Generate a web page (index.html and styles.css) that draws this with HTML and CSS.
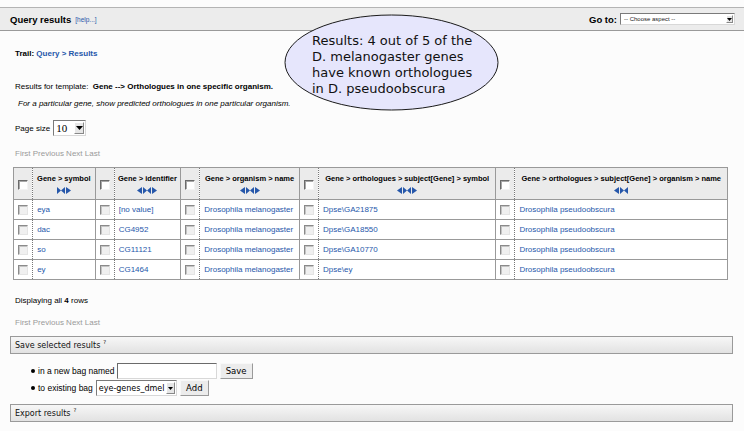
FILE: index.html
```html
<!DOCTYPE html>
<html>
<head>
<meta charset="utf-8">
<link rel="stylesheet" href="styles.css">
</head>
<body>
<div class="topbar">
  <div class="tb-left"><span class="tb-title">Query results</span><a class="help">[help...]</a></div>
  <div class="tb-right"><span class="tb-title">Go to:</span>
    <span class="sel sel-aspect"><span class="sel-text">-- Choose aspect --</span><span class="sel-btn small"><svg width="5" height="3" viewBox="0 0 5 3"><path d="M0 0H5L2.5 3Z" fill="#000"/></svg></span></span>
  </div>
</div>

<div class="main">
  <div class="trail">Trail: <a class="blue">Query &gt; Results</a></div>
  <div class="template">Results for template:&nbsp; <b>Gene --&gt; Orthologues in one specific organism.</b></div>
  <div class="desc">For a particular gene, show predicted orthologues in one particular organism.</div>
  <div class="pagesize">Page size
    <span class="sel sel-page"><span class="sel-num">10</span><span class="sel-btn"><svg width="7" height="4" viewBox="0 0 7 4"><path d="M0 0H7L3.5 4Z" fill="#000"/></svg></span></span>
  </div>
  <div class="pager">First Previous Next Last</div>

  <table class="results">
    <colgroup>
      <col class="c-cb"><col class="c1"><col class="c-cb"><col class="c2"><col class="c-cb"><col class="c3"><col class="c-cb"><col class="c4"><col class="c-cb"><col class="c5">
    </colgroup>
    <thead>
      <tr>
        <th class="cb"><span class="box hbox"></span></th>
        <th><div class="hname">Gene &gt; symbol</div><div class="arrows"><svg class="i-bow" viewBox="0 0 8 7"><path d="M0 0L4 3.5L0 7ZM8 0L4 3.5L8 7Z"/></svg><svg class="i-tri" viewBox="0 0 5 7"><path d="M0 0L5 3.5L0 7Z"/></svg></div></th>
        <th class="cb"><span class="box hbox"></span></th>
        <th><div class="hname">Gene &gt; identifier</div><div class="arrows"><svg class="i-tri" viewBox="0 0 5 7"><path d="M5 0L0 3.5L5 7Z"/></svg><svg class="i-bow" viewBox="0 0 8 7"><path d="M0 0L4 3.5L0 7ZM8 0L4 3.5L8 7Z"/></svg><svg class="i-tri" viewBox="0 0 5 7"><path d="M0 0L5 3.5L0 7Z"/></svg></div></th>
        <th class="cb"><span class="box hbox"></span></th>
        <th><div class="hname">Gene &gt; organism &gt; name</div><div class="arrows"><svg class="i-tri" viewBox="0 0 5 7"><path d="M5 0L0 3.5L5 7Z"/></svg><svg class="i-bow" viewBox="0 0 8 7"><path d="M0 0L4 3.5L0 7ZM8 0L4 3.5L8 7Z"/></svg><svg class="i-tri" viewBox="0 0 5 7"><path d="M0 0L5 3.5L0 7Z"/></svg></div></th>
        <th class="cb"><span class="box hbox"></span></th>
        <th><div class="hname">Gene &gt; orthologues &gt; subject[Gene] &gt; symbol</div><div class="arrows"><svg class="i-tri" viewBox="0 0 5 7"><path d="M5 0L0 3.5L5 7Z"/></svg><svg class="i-bow" viewBox="0 0 8 7"><path d="M0 0L4 3.5L0 7ZM8 0L4 3.5L8 7Z"/></svg><svg class="i-tri" viewBox="0 0 5 7"><path d="M0 0L5 3.5L0 7Z"/></svg></div></th>
        <th class="cb"><span class="box hbox"></span></th>
        <th><div class="hname">Gene &gt; orthologues &gt; subject[Gene] &gt; organism &gt; name</div><div class="arrows"><svg class="i-tri" viewBox="0 0 5 7"><path d="M5 0L0 3.5L5 7Z"/></svg><svg class="i-bow" viewBox="0 0 8 7"><path d="M0 0L4 3.5L0 7ZM8 0L4 3.5L8 7Z"/></svg></div></th>
      </tr>
    </thead>
    <tbody>
      <tr>
        <td class="cb"><span class="box"></span></td><td><a class="blue">eya</a></td>
        <td class="cb"><span class="box"></span></td><td><a class="blue">[no value]</a></td>
        <td class="cb"><span class="box"></span></td><td><a class="blue">Drosophila melanogaster</a></td>
        <td class="cb"><span class="box"></span></td><td><a class="blue">Dpse\GA21875</a></td>
        <td class="cb"><span class="box"></span></td><td><a class="blue">Drosophila pseudoobscura</a></td>
      </tr>
      <tr>
        <td class="cb"><span class="box"></span></td><td><a class="blue">dac</a></td>
        <td class="cb"><span class="box"></span></td><td><a class="blue">CG4952</a></td>
        <td class="cb"><span class="box"></span></td><td><a class="blue">Drosophila melanogaster</a></td>
        <td class="cb"><span class="box"></span></td><td><a class="blue">Dpse\GA18550</a></td>
        <td class="cb"><span class="box"></span></td><td><a class="blue">Drosophila pseudoobscura</a></td>
      </tr>
      <tr>
        <td class="cb"><span class="box"></span></td><td><a class="blue">so</a></td>
        <td class="cb"><span class="box"></span></td><td><a class="blue">CG11121</a></td>
        <td class="cb"><span class="box"></span></td><td><a class="blue">Drosophila melanogaster</a></td>
        <td class="cb"><span class="box"></span></td><td><a class="blue">Dpse\GA10770</a></td>
        <td class="cb"><span class="box"></span></td><td><a class="blue">Drosophila pseudoobscura</a></td>
      </tr>
      <tr>
        <td class="cb"><span class="box"></span></td><td><a class="blue">ey</a></td>
        <td class="cb"><span class="box"></span></td><td><a class="blue">CG1464</a></td>
        <td class="cb"><span class="box"></span></td><td><a class="blue">Drosophila melanogaster</a></td>
        <td class="cb"><span class="box"></span></td><td><a class="blue">Dpse\ey</a></td>
        <td class="cb"><span class="box"></span></td><td><a class="blue">Drosophila pseudoobscura</a></td>
      </tr>
    </tbody>
  </table>

  <div class="displaying">Displaying all <b>4</b> rows</div>
  <div class="pager pager2">First Previous Next Last</div>

  <div class="bar">Save selected results<sup>?</sup></div>
  <div class="saveform">
    <div class="frow"><span class="bullet"></span>in a new bag named<span class="input"></span><span class="btn btn-save">Save</span></div>
    <div class="frow frow2"><span class="bullet"></span>to existing bag<span class="sel sel-bag"><span class="sel-bagtext">eye-genes_dmel</span><span class="sel-btn"><svg width="5" height="3" viewBox="0 0 5 3"><path d="M0 0H5L2.5 3Z" fill="#000"/></svg></span></span><span class="btn btn-add">Add</span></div>
  </div>
  <div class="bar bar2">Export results<sup>?</sup></div>
</div>

<div class="callout">
  <svg class="callout-shape" width="216" height="98" viewBox="0 0 216 98"><ellipse cx="107.5" cy="48.5" rx="106.5" ry="47.5" fill="#e6e6fc" stroke="#1a1a1a" stroke-width="1"/></svg>
  <div class="callout-text">Results: 4 out of 5 of the<br>D. melanogaster genes<br>have known orthologues<br>in D. pseudoobscura</div>
</div>
</body>
</html>
```
FILE: styles.css
```css
html, body { margin: 0; }
body {
  background: #fcfcfc;
  font-family: "Liberation Sans", Arial, sans-serif;
  font-size: 8px;
  color: #000;
  position: relative;
  height: 431px;
  overflow: hidden;
}
.blue { color: #2657aa; text-decoration: none; }

.topbar {
  margin-top: 7px;
  height: 22px;
  border-top: 1px solid #b4b4b4;
  border-bottom: 1px solid #9a9a9a;
  background: #ececec;
  display: flex;
  align-items: center;
  justify-content: space-between;
  padding: 0 9px 0 10px;
}
.tb-left, .tb-right { display: flex; align-items: center; }
.tb-title { font-weight: bold; font-size: 9.5px; }
.help { font-size: 6.5px; color: #2657aa; margin-left: 4px; }

.sel {
  display: inline-flex;
  align-items: center;
  justify-content: space-between;
  box-sizing: border-box;
  background: #fff;
  border: 1px solid;
  border-color: #7a7a7a #d8d8d8 #d8d8d8 #7a7a7a;
  white-space: nowrap;
}
.sel-btn {
  display: flex; align-items: center; justify-content: center;
  box-sizing: border-box;
  flex: none;
  background: #e6e6e6;
  border: 1px solid;
  border-color: #fff #888 #888 #fff;
}
.sel-aspect { width: 115px; height: 12px; margin-left: 3px; padding-left: 3px; }
.sel-text { font-size: 6px; color: #222; }
.sel-btn.small { width: 7px; height: 8px; margin-right: 1px; }

.main { padding: 0 11px 0 10px; }
.trail { margin-top: 17px; line-height: 12px; padding-left: 5px; font-weight: bold; }
.template { margin-top: 21px; line-height: 12px; padding-left: 5px; }
.desc { margin-top: 5px; line-height: 12px; padding-left: 8px; font-style: italic; }
.pagesize { margin-top: 10px; height: 16px; display: flex; align-items: center; padding-left: 5px; }
.sel-page { width: 33px; height: 16px; margin-left: 3px; padding-left: 2px; }
.sel-num { font-family: "Liberation Serif", serif; font-size: 11px; }
.sel-page .sel-btn { width: 10px; height: 12px; margin-right: 1px; }
.pager { margin-top: 12px; line-height: 12px; padding-left: 5px; color: #9a9a9a; }

.results {
  margin: 7px 0 0 3px;
  width: 715px;
  table-layout: fixed;
  border-collapse: collapse;
  border: 1px solid #999;
  background: #fff;
}
.c-cb { width: 19px; }
.c1 { width: 62px; }
.c2 { width: 66px; }
.c3 { width: 99px; }
.c4 { width: 176px; }
.c5 { width: 211px; }
.results th, .results td {
  padding: 0 0 0 4px;
  border-left: 1px solid #999;
  border-bottom: 1px solid #999;
  white-space: nowrap;
  overflow: hidden;
}
.results th.cb, .results td.cb { padding: 0; text-align: center; }
.results th.cb + th, .results td.cb + td { border-left: 1px dotted #777; }
.results th {
  background: #ebebeb;
  height: 32px;
  vertical-align: top;
  padding: 6px 0 0;
  text-align: center;
  font-weight: bold;
  font-size: 7.5px;
  box-sizing: border-box;
}
.results th.cb { vertical-align: middle; padding: 2px 0 0; }
.results td { height: 20px; box-sizing: border-box; vertical-align: middle; }
.hname { line-height: 10px; }
.arrows { margin-top: 3px; height: 7px; display: flex; justify-content: center; gap: 1px; }
.arrows svg { height: 7px; fill: #2657aa; display: block; }
.i-tri { width: 5px; }
.i-bow { width: 8px; }

.box {
  display: inline-block;
  vertical-align: middle;
  width: 10px; height: 10px;
  box-sizing: border-box;
  border: 1px solid;
  border-color: #8a8a8a #e4e4e4 #e4e4e4 #8a8a8a;
  background: #f0f0f0;
  box-shadow: inset 1px 1px 0 #c4c4c4;
}
.hbox { background: #fff; border-color: #6a6a6a #f4f4f4 #f4f4f4 #6a6a6a; box-shadow: inset 1px 1px 0 #a8a8a8; }

.displaying { margin-top: 15px; line-height: 12px; padding-left: 5px; }
.pager2 { margin-top: 10px; }

.bar {
  margin-top: 7px;
  height: 18px;
  box-sizing: border-box;
  border: 1px solid #9a9a9a;
  background: linear-gradient(#f7f7f7, #e2e2e2);
  font-family: "DejaVu Sans", sans-serif;
  font-size: 8px;
  color: #111;
  display: flex;
  align-items: center;
  padding-left: 4px;
}
.bar sup { font-size: 5.5px; margin-left: 3px; position: relative; top: -3px; vertical-align: baseline; }
.bar2 { margin-top: 8px; }

.saveform { margin-top: 9px; padding-left: 21px; font-size: 8.5px; }
.frow { display: flex; align-items: center; height: 16px; white-space: nowrap; }
.frow2 { margin-top: 1px; }
.bullet { width: 4px; height: 4px; border-radius: 50%; background: #000; margin-right: 3px; }
.input {
  width: 100px; height: 16px; margin-left: 2px;
  box-sizing: border-box;
  background: #fff;
  border: 1px solid;
  border-color: #6a6a6a #d8d8d8 #d8d8d8 #6a6a6a;
}
.btn {
  display: flex; align-items: center; justify-content: center;
  box-sizing: border-box;
  height: 16px;
  margin-left: 3px;
  background: #ececec;
  border: 1px solid;
  border-color: #f8f8f8 #9a9a9a #9a9a9a #f8f8f8;
  font-family: "DejaVu Sans", sans-serif;
  font-size: 8.5px;
}
.btn-save { width: 33px; }
.btn-add { width: 29px; }
.sel-bag { width: 81px; height: 16px; margin-left: 3px; padding-left: 2px; }
.sel-bagtext { font-family: "DejaVu Sans", sans-serif; font-size: 8px; }
.sel-bag .sel-btn { width: 9px; height: 12px; margin-right: 1px; }

.callout { position: absolute; left: 284px; top: 14px; width: 216px; height: 98px; }
.callout-shape { position: absolute; left: 0; top: 0; }
.callout-text {
  position: absolute; left: 28px; top: 19px;
  font-family: "DejaVu Sans", sans-serif;
  font-size: 13px;
  line-height: 16px;
  color: #111;
  white-space: nowrap;
}
```
